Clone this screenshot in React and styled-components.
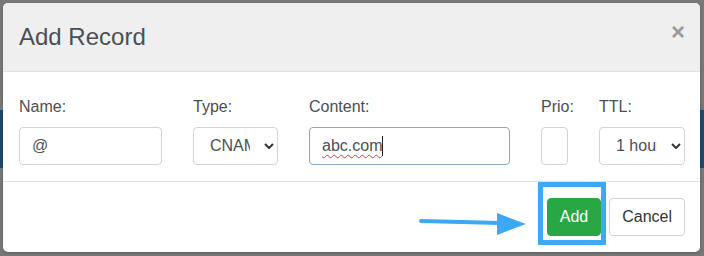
import React from 'react';
import styled, { createGlobalStyle } from 'styled-components';

const GlobalStyle = createGlobalStyle`
    html, body {
        margin: 0;
        padding: 0;
    }
    body {
        font-family: 'Liberation Sans', Arial, sans-serif;
        background: #787878;
    }
`;

const Backdrop = styled.div`
    width: 704px;
    height: 256px;
    box-sizing: border-box;
    padding: 3px 4px 4px 3px;
    background: linear-gradient(
        to bottom,
        #787878 110px,
        #1f4a6c 110px,
        #1f4a6c 168px,
        #787878 168px
    );
`;

const Modal = styled.div`
    position: relative;
    width: 697px;
    height: 249px;
    background: #fff;
    border-radius: 5px;
    box-shadow: 0 1px 3px rgba(0, 0, 0, 0.25);
    display: flex;
    flex-direction: column;
    overflow: hidden;
`;

const Header = styled.div`
    display: flex;
    align-items: flex-start;
    justify-content: space-between;
    padding: 16px 15px 16px 16px;
    background: #efefef;
    border-bottom: 1px solid #dee2e6;
`;

const Title = styled.h5`
    margin: 0;
    font-size: 24px;
    line-height: 36px;
    font-weight: 400;
    color: #4a4f55;
`;

const Close = styled.button`
    margin-top: 1px;
    padding: 0;
    border: 0;
    background: transparent;
    font-family: 'Liberation Sans', Arial, sans-serif;
    font-size: 24px;
    font-weight: 700;
    line-height: 1;
    color: #9a9a9a;
`;

const Body = styled.div`
    padding: 23px 15px 16px 16px;
    border-bottom: 1px solid #dee2e6;
`;

const Fields = styled.div`
    display: grid;
    grid-template-columns: 143px 85px 201px 27px minmax(0, 1fr);
    column-gap: 31px;
`;

const Field = styled.div`
    display: flex;
    flex-direction: column;
    min-width: 0;
`;

const Label = styled.label`
    font-size: 16px;
    line-height: 24px;
    margin-bottom: 8px;
    color: #4a4f55;
`;

const Input = styled.input`
    box-sizing: border-box;
    width: 100%;
    height: 38px;
    padding: 0 12px;
    border: 1px solid #ced4da;
    border-radius: 4px;
    font-family: 'Liberation Sans', Arial, sans-serif;
    font-size: 16px;
    color: #495057;
    background: #fff;
    outline: none;
`;

const FocusedInput = styled.div`
    box-sizing: border-box;
    height: 38px;
    padding: 0 12px;
    border: 1px solid #86a7c8;
    border-radius: 4px;
    display: flex;
    align-items: center;
    font-size: 16px;
    color: #495057;
`;

const Misspelled = styled.span`
    text-decoration: underline wavy #e0393e;
    text-decoration-thickness: 1px;
    text-underline-offset: 3px;
`;

const Caret = styled.span`
    display: inline-block;
    width: 1px;
    height: 20px;
    background: #222;
`;

const Select = styled.div`
    box-sizing: border-box;
    height: 38px;
    padding-left: 16px;
    border: 1px solid #ced4da;
    border-radius: 4px;
    display: flex;
    align-items: center;
    font-size: 16px;
    color: #495057;
`;

const SelectText = styled.span`
    flex: 1 1 0;
    min-width: 0;
    overflow: hidden;
    white-space: nowrap;
`;

const Chevron = styled.svg`
    flex: none;
    margin: 0 3px 0 14px;
`;

const Footer = styled.div`
    display: flex;
    justify-content: flex-end;
    gap: 8px;
    padding: 16px 15px;
`;

const Button = styled.button`
    height: 38px;
    padding: 0 12px;
    border-radius: 4px;
    font-family: 'Liberation Sans', Arial, sans-serif;
    font-size: 16px;
    border: 1px solid ${({ primary }) => (primary ? '#28a745' : '#cfd3d7')};
    background: ${({ primary }) => (primary ? '#28a745' : '#fff')};
    color: ${({ primary }) => (primary ? '#fff' : '#333')};
`;

const Highlight = styled.div`
    position: absolute;
    left: 535px;
    top: 179px;
    width: 68px;
    height: 63px;
    box-sizing: border-box;
    border: 5px solid #3da8f4;
    pointer-events: none;
`;

const Arrow = styled.svg`
    position: absolute;
    left: 412px;
    top: 205px;
`;

const ChevronIcon = () => (
    <Chevron width="10" height="6" viewBox="0 0 10 6">
        <path d="M1 1 L5 5 L9 1" fill="none" stroke="#333" strokeWidth="2" />
    </Chevron>
);

export default function App() {
    return (
        <>
            <GlobalStyle />
            <Backdrop>
                <Modal>
                    <Header>
                        <Title>Add Record</Title>
                        <Close>×</Close>
                    </Header>
                    <Body>
                        <Fields>
                            <Field>
                                <Label>Name:</Label>
                                <Input readOnly defaultValue="@" />
                            </Field>
                            <Field>
                                <Label>Type:</Label>
                                <Select>
                                    <SelectText>CNAME</SelectText>
                                    <ChevronIcon />
                                </Select>
                            </Field>
                            <Field>
                                <Label>Content:</Label>
                                <FocusedInput>
                                    <Misspelled>abc.com</Misspelled>
                                    <Caret />
                                </FocusedInput>
                            </Field>
                            <Field>
                                <Label>Prio:</Label>
                                <Input readOnly defaultValue="" />
                            </Field>
                            <Field>
                                <Label>TTL:</Label>
                                <Select>
                                    <SelectText>1 hour</SelectText>
                                    <ChevronIcon />
                                </Select>
                            </Field>
                        </Fields>
                    </Body>
                    <Footer>
                        <Button primary>Add</Button>
                        <Button>Cancel</Button>
                    </Footer>
                    <Highlight />
                    <Arrow width="115" height="32" viewBox="0 0 115 32">
                        <path d="M6 13 L86 15" stroke="#3da8f4" strokeWidth="4" strokeLinecap="round" />
                        <polygon points="82,5 111,16 82,27" fill="#3da8f4" />
                    </Arrow>
                </Modal>
            </Backdrop>
        </>
    );
}
